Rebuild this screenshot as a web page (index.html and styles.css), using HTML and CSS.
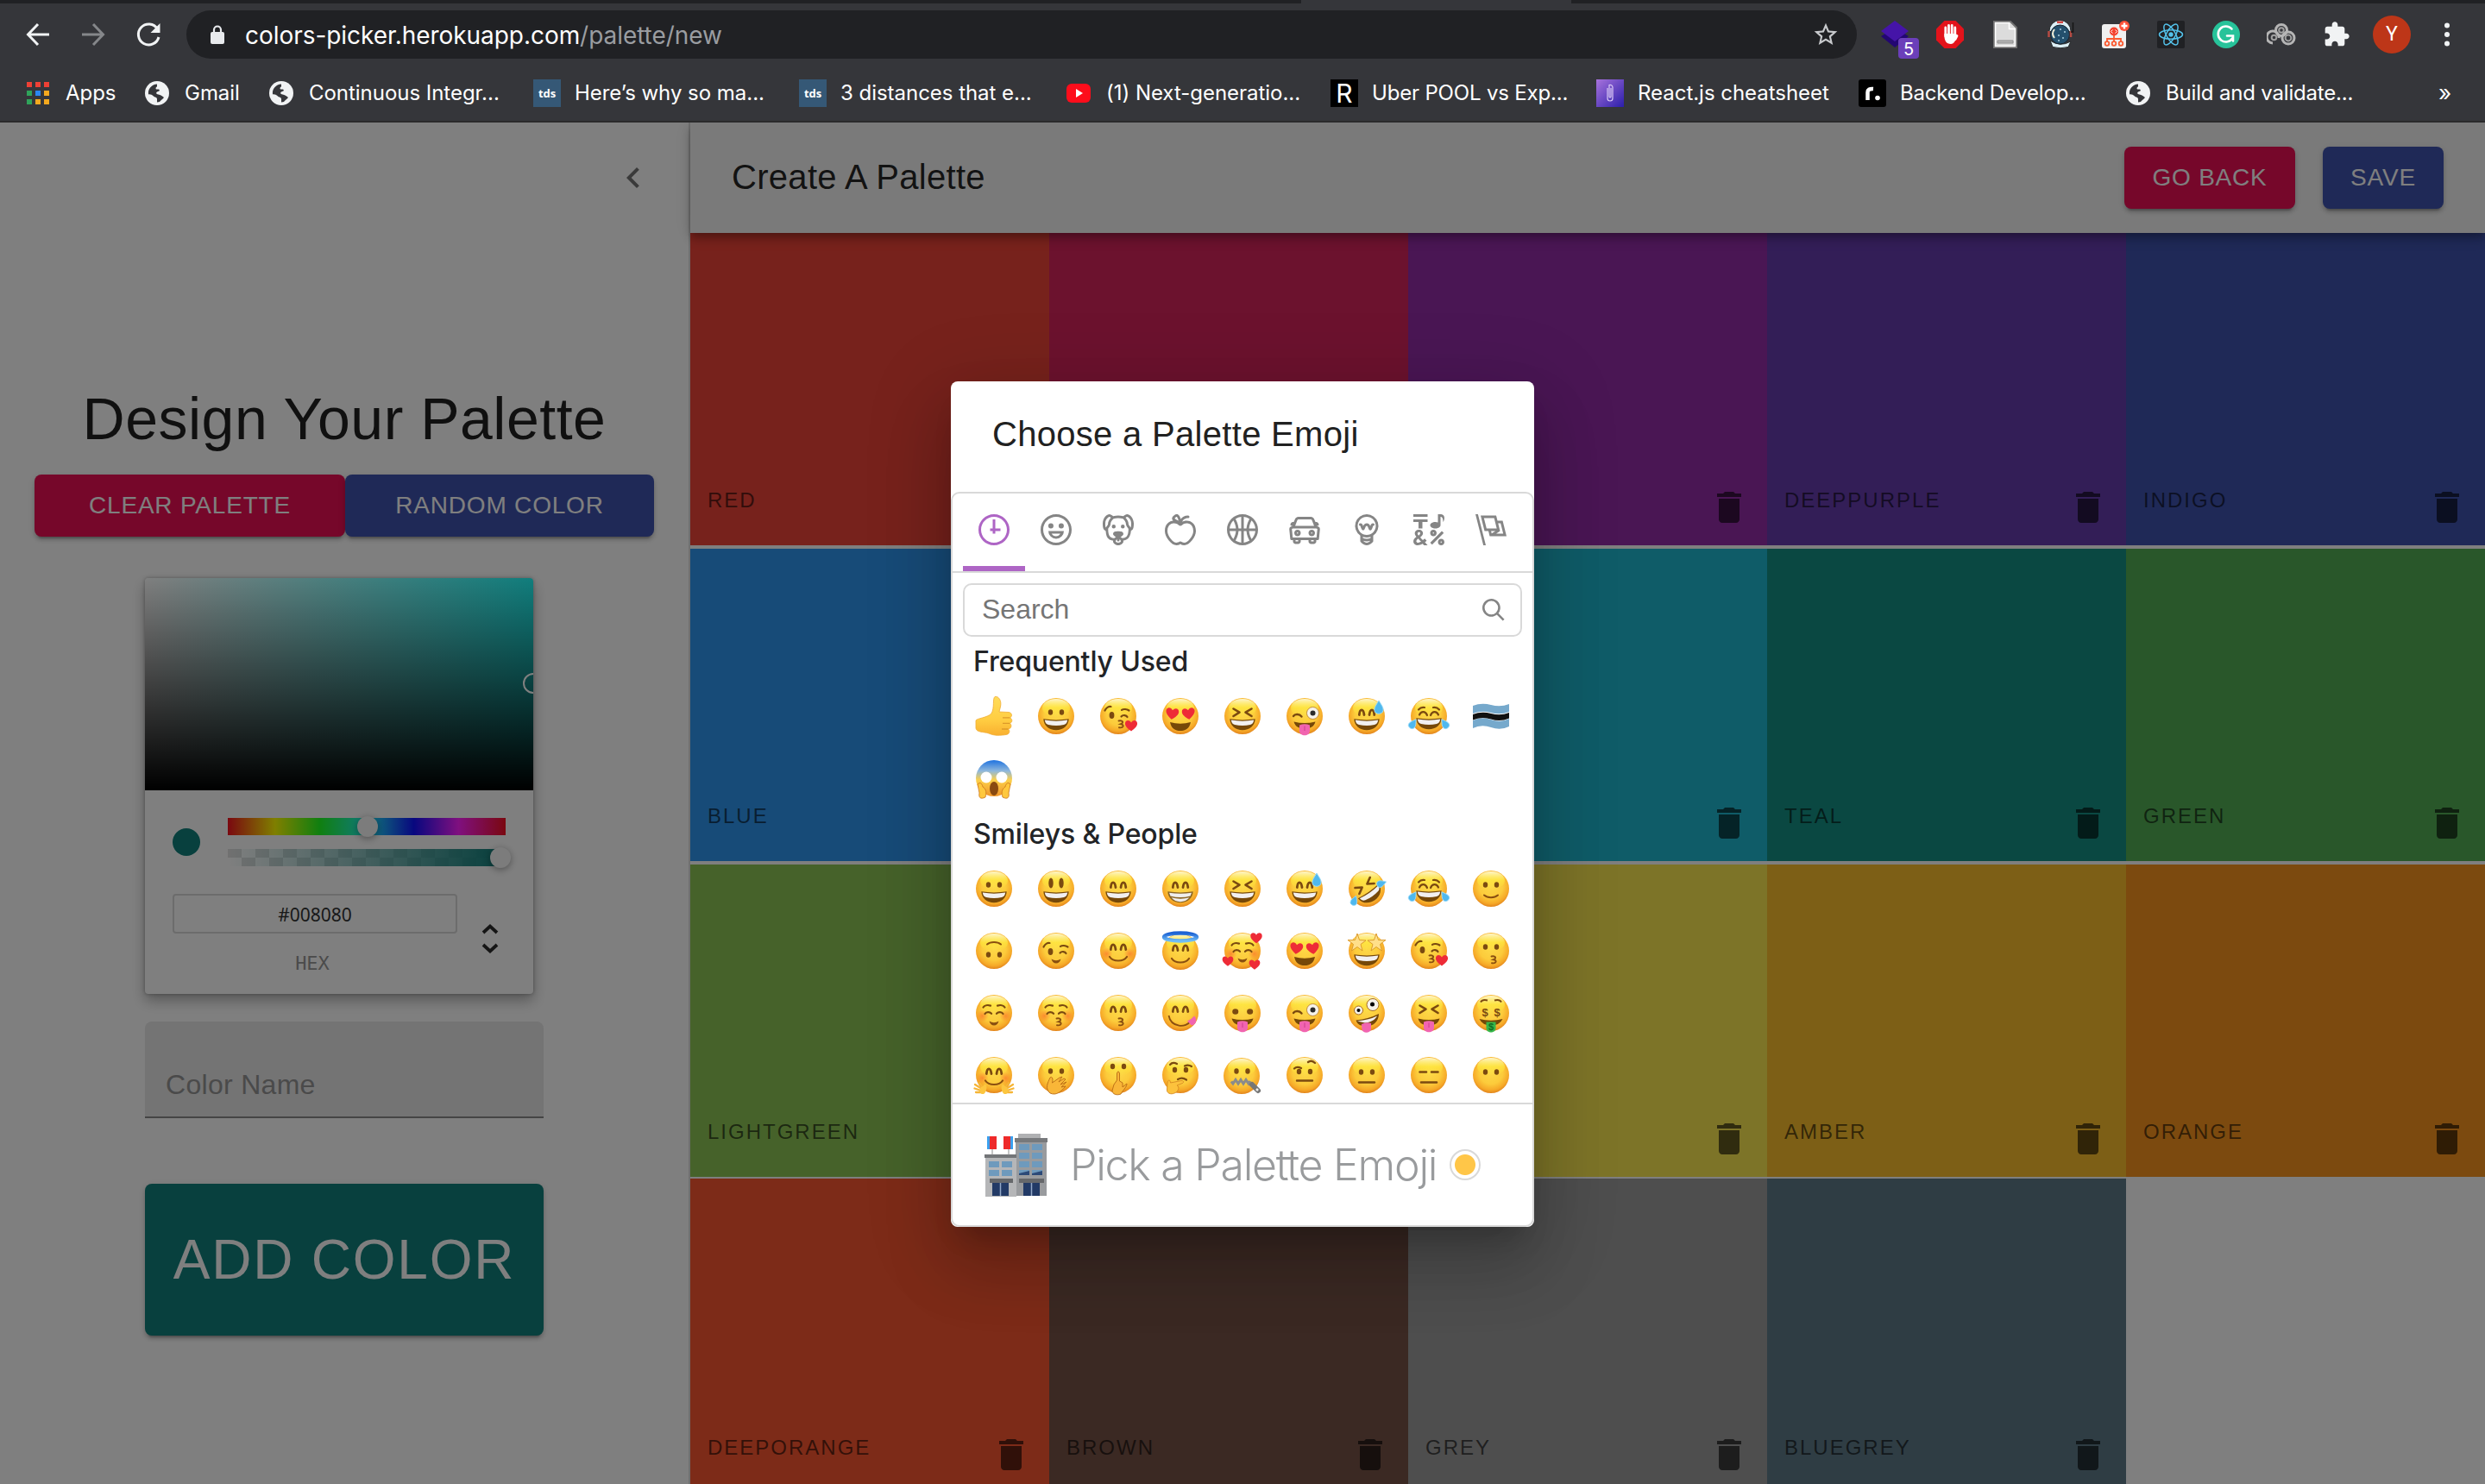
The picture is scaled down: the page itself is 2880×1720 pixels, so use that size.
FILE: index.html
```html
<!DOCTYPE html>
<html lang="en">
<head>
<meta charset="utf-8">
<title>Create A Palette</title>
<link rel="stylesheet" href="styles.css">
</head>
<body>
<svg class="defs" width="0" height="0" aria-hidden="true">
  <defs>
    <radialGradient id="skin" cx=".5" cy=".42" r=".6">
      <stop offset="0" stop-color="#fdd949"/><stop offset=".55" stop-color="#fccb3b"/><stop offset=".82" stop-color="#f6a928"/><stop offset="1" stop-color="#de7d1a"/>
    </radialGradient>
    <linearGradient id="shine" x1="0" y1="0" x2="0" y2="1">
      <stop offset="0" stop-color="#fffbe0" stop-opacity=".9"/><stop offset=".5" stop-color="#fff23f" stop-opacity=".55"/><stop offset="1" stop-color="#ffe93a" stop-opacity="0"/>
    </linearGradient>
    <linearGradient id="hand" x1="0" y1="0" x2="0" y2="1"><stop offset="0" stop-color="#ffdc5a"/><stop offset=".6" stop-color="#ffcd42"/><stop offset="1" stop-color="#f9b030"/></linearGradient>
    <linearGradient id="fear" x1="0" y1="0" x2="0" y2="1"><stop offset="0" stop-color="#1e72e0"/><stop offset=".3" stop-color="#8fb8dc"/><stop offset=".55" stop-color="#fcd04a"/><stop offset="1" stop-color="#f0962a"/></linearGradient>
    <linearGradient id="halo" x1="0" y1="0" x2="0" y2="1"><stop offset="0" stop-color="#1c62d4"/><stop offset="1" stop-color="#6fbdf5"/></linearGradient>
    <linearGradient id="violet" x1="0" y1="0" x2="1" y2="1"><stop offset="0" stop-color="#a873dc"/><stop offset="1" stop-color="#2b1eaa"/></linearGradient>
    <radialGradient id="blushfill"><stop offset="0" stop-color="#fb7a2c" stop-opacity=".75"/><stop offset="1" stop-color="#fb7a2c" stop-opacity="0"/></radialGradient>
    <g id="face"><circle cx="24" cy="24" r="21" fill="url(#skin)"/><ellipse cx="24" cy="14.5" rx="16" ry="10.5" fill="url(#shine)"/></g>
    <g id="dots" fill="#7b4a10"><ellipse cx="17.5" cy="19.5" rx="2.7" ry="3.3"/><ellipse cx="30.5" cy="19.5" rx="2.7" ry="3.3"/></g>
    <g id="tall" fill="#7b4a10"><ellipse cx="18" cy="17.5" rx="2.7" ry="6"/><ellipse cx="30" cy="17.5" rx="2.7" ry="6"/></g>
    <g id="arcs" fill="none" stroke="#7b4a10" stroke-width="2.8" stroke-linecap="round"><path d="M15.3 22.5C16 15 20 15 21 22.5M27 22.5C28 15 32 15 32.8 22.5"/></g>
    <g id="squint" fill="none" stroke="#7b4a10" stroke-width="2.6" stroke-linecap="round" stroke-linejoin="round"><path d="M13.5 15.5L20.5 19.7 13.5 24M34.5 15.5L27.5 19.7 34.5 24"/></g>
    <g id="calm" fill="none" stroke="#7b4a10" stroke-width="2.2" stroke-linecap="round"><path d="M13.5 25C15 22.5 19 22.5 21 24.8M27 24.8C29 22.5 33 22.5 34.5 25M11.5 17.5C13 15 17 14.6 20 15.6M36.5 17.5C35 15 31 14.6 28 15.6"/></g>
    <g id="wink" fill="none" stroke="#7b4a10" stroke-width="2.2" stroke-linecap="round"><path d="M9.5 19.5C11 16.5 14 14.5 16.5 15M29 18.8C31 17.5 35 17.8 37.5 19.5M28.5 26.5C30.5 24 34.5 25 35.5 27"/><ellipse cx="17.5" cy="25" rx="1.8" ry="3" fill="#7b4a10"/></g>
    <g id="grin"><path d="M9.3 27.3Q24 29.6 38.7 27.3C38.5 35 32 40.3 24 40.3S9.500 35 9.300 27.300Z" fill="#764808"/><path d="M10.800 28.600Q24 30.800 37.200 28.600C36.800 31.800 35.500 33.500 33 34Q24 36 15 34C12.500 33.500 11.200 31.800 10.800 28.600Z" fill="#f2f0f0"/></g>
    <g id="beam"><path d="M9.300 27.300Q24 29.600 38.700 27.300C38.500 35 32 40.300 24 40.300S9.500 35 9.300 27.300Z" fill="#8b6524"/><path d="M11 28.700Q24 31 37 28.700L35.500 32.500Q24 35.500 12.500 32.500ZM13.500 34.300Q24 37 34.500 34.300C32 37.500 28 39.200 24 39.200S16 37.500 13.500 34.300Z" fill="#efeeee"/></g>
    <g id="smile" fill="none" stroke="#8a4f10" stroke-width="2.200" stroke-linecap="round"><path d="M14 31C18 37 30 37 34 31"/></g>
    <g id="slight" fill="none" stroke="#8a4f10" stroke-width="2" stroke-linecap="round"><path d="M16 31.500C20 35 28 35 32 31.500"/></g>
    <path id="smirk" d="M18.500 33.500Q24 37 29.500 33.500Q28 38.500 24 38.500T18.500 33.500Z" fill="#8a4f10"/>
    <path id="pucker" d="M24.500 30.500C29 29.300 31 32.800 27 34.200C31.500 35 30 39.200 25 38.200" fill="none" stroke="#8a4f10" stroke-width="1.900" stroke-linecap="round"/>
    <g id="blush" fill="url(#blushfill)"><circle cx="10.500" cy="27.500" r="7"/><circle cx="37.500" cy="27.500" r="7"/></g>
    <path id="heart" d="M0 6.500C-4 3.500-7.500 .5-7-3-6.500-6.800-2-7 0-3.500 2-7 6.500-6.800 7-3 7.500 .5 4 3.500 0 6.500Z" fill="#ee2b37"/>
    <g id="hearts"><use href="#heart" transform="translate(14.500 21) rotate(8) scale(1.050)"/><use href="#heart" transform="translate(33.500 21) rotate(-8) scale(1.050)"/></g>
    <g id="open"><path d="M12 31Q24 34.500 36 31C34.500 38.500 30 41 24 41S13.500 38.500 12 31Z" fill="#764808"/></g>
    <g id="tongue"><path d="M11.500 30.500Q24 33.500 36.500 30.500C35 36.500 30 38.500 24 38.500S13 36.500 11.500 30.500Z" fill="#764808"/><path d="M18 34.500Q24 32 30 34.500V41C30 48 18 48 18 41Z" fill="#f164b0"/><path d="M24 35.500V41" stroke="#cf3d8d" stroke-width="1"/></g>
    <g id="goofy"><circle cx="33.500" cy="20.500" r="7" fill="#f6f3ea" stroke="#b4752a" stroke-width=".8"/><circle cx="33.500" cy="20.500" r="3" fill="#2b2b2b"/><path d="M11 24C13 21 18 21.500 20.500 24.500" fill="none" stroke="#7b4a10" stroke-width="2.400" stroke-linecap="round"/></g>
    <path id="drop" d="M0-8C3-3 5.500 0 5 3.500 4.500 8.500-4.500 8.500-5 3.500-5.500 0-3-3 0-8Z" fill="#4fb8ee" stroke="#9ddcf9" stroke-width="1"/>
    <g id="joy"><path d="M13 22.500C15 18 20 18 22 23M26 23C28 18 33 18 35 22.500M12 16.500Q15 13 19 14M36 16.500Q33 13 29 14" fill="none" stroke="#7b4a10" stroke-width="2.200" stroke-linecap="round"/><use href="#grin" transform="translate(0 -1)"/><use href="#drop" transform="translate(5.500 33) rotate(35) scale(.8)"/><use href="#drop" transform="translate(42.500 33) rotate(-35) scale(.8)"/></g>
    <g id="globe"><circle cx="14" cy="14" r="14" fill="#f1f3f4"/><path d="M14 3.500A10.500 10.500 0 0 0 4 15.500C6 15 8 16 10 17.500 11 19 14 18 14 21V24.400A10.500 10.500 0 0 0 17 24C18 22 21 21 22 19 20 17 18 16 15.500 15.500 13 15 12 13 15 12 18 11.500 17 9 14.500 9.500 12 10 12 7 14 6.500Z" fill="#35363a"/></g>
    <path id="trash" d="M6 19c0 1.100.9 2 2 2h8c1.100 0 2-.9 2-2V7H6v12zM19 4h-3.500l-1-1h-5l-1 1H5v2h14V4z"/>
  </defs>
</svg>

<header class="chrome">
  <div class="tabstrip"><span class="tabstrip-active"></span></div>
  <div class="toolbar">
    <div class="nav">
      <svg width="32" height="32" viewBox="0 0 32 32" fill="none" stroke="#f1f3f4" stroke-width="3"><path d="M29 16H5M16 4L4.500 16 16 28"/></svg>
      <svg width="32" height="32" viewBox="0 0 32 32" fill="none" stroke="#85878a" stroke-width="3"><path d="M3 16H27M16 4L27.500 16 16 28"/></svg>
      <svg width="32" height="32" viewBox="0 0 32 32"><path d="M26.500 9.500A12 12 0 1 0 28 19" fill="none" stroke="#f1f3f4" stroke-width="3"/><path d="M29.500 3V14H18.500Z" fill="#f1f3f4"/></svg>
    </div>
    <div class="omnibox">
      <svg width="16" height="22" viewBox="0 0 16 22"><rect y="8" width="16" height="14" rx="2" fill="#e8eaed"/><path d="M4 9V5.500a4 4 0 0 1 8 0V9" fill="none" stroke="#e8eaed" stroke-width="2.200"/></svg>
      <span class="url">colors-picker.herokuapp.com<span class="url-path">/palette/new</span></span>
      <svg class="star" width="32" height="32" viewBox="0 0 24 24" fill="#c8cacd"><path d="M22 9.240l-7.190-.62L12 2 9.190 8.630 2 9.240l5.460 4.730L5.820 21 12 17.270 18.180 21l-1.630-7.030L22 9.240zM12 15.400l-3.760 2.270 1-4.280-3.320-2.880 4.380-.38L12 6.100l1.710 4.040 4.380.38-3.320 2.880 1 4.280L12 15.400z"/></svg>
    </div>
    <div class="extensions">
      <div class="ext"><svg width="32" height="32" viewBox="0 0 32 32"><path d="M0 18L16 31 32 18 16 8Z" fill="#230672"/><path d="M0 12L16 0 32 12 16 24Z" fill="#4514a8"/></svg><span class="badge">5</span></div>
      <div class="ext"><svg width="32" height="32" viewBox="0 0 32 32"><path d="M9.500 0H22.500L32 9.500V22.500L22.500 32H9.500L0 22.500V9.500Z" fill="#e3131b"/><path d="M10.800 18V8M14.500 16V5.500M18.200 16V5.500M21.800 18V8M24 17.500L22 21.500" stroke="#fff" stroke-width="2.800" stroke-linecap="round"/><path d="M9.400 15H23.200V20C22 24 20 27 17 27 11.500 27 9.400 23 9.400 17Z" fill="#fff"/></svg></div>
      <div class="ext"><svg width="28" height="32" viewBox="0 0 28 32"><path d="M1 1H20L27 8V31H1Z" fill="#dcdcdc" stroke="#727272" stroke-width="2"/><path d="M2.500 2.500H18.500V9.500H25.500V29.500H2.500Z" fill="none" stroke="#fff" stroke-width="1.500"/><path d="M5 23H23V26H5Z" fill="#b4b4b4" stroke="#8d8d8d"/></svg></div>
      <div class="ext"><svg width="32" height="32" viewBox="0 0 32 32"><path d="M3 12A12.500 12.500 0 0 1 28 12M4 23Q15.500 31 28 24L25 30.500Q16 33 7 30.500Z" fill="#dceff6" stroke="#26292b"/><circle cx="15.500" cy="16" r="11" fill="#24506d" stroke="#16222c"/><path d="M9 10Q5 15 9 20" stroke="#f4f0d8" stroke-width="2" fill="none"/><path d="M12 .5H19V3H12Z" fill="#d34844"/><path d="M2.500 12V19M28 12V19" stroke="#b64b43" stroke-width="2.500"/><path d="M30.500 2V13H28" stroke="#151515" stroke-width="1.500" fill="none"/><g fill="#b9dce9"><circle cx="16" cy="10" r=".9"/><circle cx="21" cy="13" r=".9"/><circle cx="14" cy="17" r=".9"/><circle cx="19" cy="20" r=".9"/><circle cx="14" cy="23" r=".9"/></g></svg></div>
      <div class="ext"><svg width="32" height="32" viewBox="0 0 32 32"><rect y="4" width="28" height="28" rx="3" fill="#f0f0f0"/><g fill="none" stroke="#fb5b31" stroke-width="1.800"><path d="M14 15V24M6 24V21H22V24"/><circle cx="6" cy="26.500" r="2.300"/><circle cx="14" cy="26.500" r="2.300"/><circle cx="22" cy="26.500" r="2.300"/></g><circle cx="14" cy="12.500" r="5" fill="#f4432f"/><path d="M12.500 10.500L10.500 12.500 12.500 14.500M15.500 10.500L17.500 12.500 15.500 14.500" fill="none" stroke="#fff"/><circle cx="26" cy="6" r="6" fill="#ff5238"/><path d="M26 2.500V9.500M22.500 6H29.500" stroke="#fff" stroke-width="2.400"/></svg></div>
      <div class="ext"><svg width="32" height="32" viewBox="0 0 32 32"><rect width="32" height="32" rx="2" fill="#202124"/><g fill="none" stroke="#53c1ea" stroke-width="1.500"><ellipse cx="16" cy="16" rx="13.500" ry="5.200"/><ellipse cx="16" cy="16" rx="13.500" ry="5.200" transform="rotate(60 16 16)"/><ellipse cx="16" cy="16" rx="13.500" ry="5.200" transform="rotate(120 16 16)"/></g><circle cx="16" cy="16" r="2.700" fill="#53c1ea"/></svg></div>
      <div class="ext"><svg width="32" height="32" viewBox="0 0 32 32"><circle cx="16" cy="16" r="16" fill="#27c39a"/><path d="M22.500 9.500A9 9 0 1 0 23.500 20M17 17.500H24V23.500" fill="none" stroke="#fff" stroke-width="2.600" stroke-linecap="round"/></svg></div>
      <div class="ext"><svg width="34" height="28" viewBox="0 0 34 28" fill="none"><g stroke="#b5b5b5" stroke-width="3"><circle cx="17" cy="9" r="6.500"/><circle cx="25" cy="18" r="7"/><path d="M7 24A7 7 0 1 1 14 18"/></g><g stroke="#a0a0a0" stroke-width="2"><circle cx="17" cy="9" r="2.800"/><circle cx="25" cy="18" r="3.400"/><circle cx="8.500" cy="17.500" r="2.800"/></g></svg></div>
      <div class="ext"><svg width="32" height="32" viewBox="0 0 24 24" fill="#f1f3f4"><path d="M20.500 11H19V7c0-1.100-.9-2-2-2h-4V3.500C13 2.120 11.880 1 10.500 1S8 2.120 8 3.500V5H4c-1.100 0-1.990.9-1.990 2v3.800H3.500c1.490 0 2.700 1.210 2.700 2.700s-1.210 2.700-2.700 2.700H2V20c0 1.100.9 2 2 2h3.800v-1.500c0-1.490 1.210-2.700 2.700-2.700 1.490 0 2.700 1.210 2.700 2.700V22H17c1.100 0 2-.9 2-2v-4h1.500c1.380 0 2.500-1.120 2.500-2.500S21.880 11 20.500 11z"/></svg></div>
      <div class="ext"><span class="avatar">Y</span></div>
      <div class="ext"><svg width="6" height="28" viewBox="0 0 6 28" fill="#f1f3f4"><circle cx="3" cy="3.500" r="3"/><circle cx="3" cy="14" r="3"/><circle cx="3" cy="24.500" r="3"/></svg></div>
    </div>
  </div>
  <nav class="bookmarks">
    <a class="bookmark"><span class="fav"><svg width="28" height="28" viewBox="0 0 28 28"><path d="M1 1h6v6H1zM11 1h6v6h-6zM21 1h6v6h-6z" fill="#ee4035"/><path d="M1 11h6v6H1zM1 21h6v6H1z" fill="#2fa35a"/><path d="M11 11h6v6h-6z" fill="#2a86f2"/><path d="M21 11h6v6h-6zM11 21h6v6h-6zM21 21h6v6h-6z" fill="#f4a91f"/></svg></span><span>Apps</span></a>
    <a class="bookmark"><span class="fav"><svg width="28" height="28"><use href="#globe"/></svg></span><span>Gmail</span></a>
    <a class="bookmark"><span class="fav"><svg width="28" height="28"><use href="#globe"/></svg></span><span>Continuous Integr...</span></a>
    <a class="bookmark"><span class="fav fav-tds">tds</span><span>Here’s why so ma...</span></a>
    <a class="bookmark"><span class="fav fav-tds">tds</span><span>3 distances that e...</span></a>
    <a class="bookmark"><span class="fav"><svg width="28" height="22" viewBox="0 0 28 22"><rect width="28" height="22" rx="6" fill="#fd0d1b"/><path d="M11 6L19 11 11 16Z" fill="#fff"/></svg></span><span>(1) Next-generatio...</span></a>
    <a class="bookmark"><span class="fav fav-r">R</span><span class="snug">Uber POOL vs Exp...</span></a>
    <a class="bookmark"><span class="fav"><svg width="32" height="32" viewBox="0 0 32 32"><rect width="32" height="32" fill="url(#violet)"/><path d="M13 10V22a3 3 0 0 0 6 0V9a3 3 0 0 0-4-2.500V20a1 1 0 0 0 2 0V10" fill="none" stroke="#d9c9f5" stroke-width="1.200"/></svg></span><span>React.js cheatsheet</span></a>
    <a class="bookmark"><span class="fav"><svg width="32" height="32" viewBox="0 0 32 32"><rect width="32" height="32" rx="3"/><path d="M10.500 24V15Q10.500 10.500 17 11" fill="none" stroke="#fff" stroke-width="4.500"/><circle cx="22" cy="21.500" r="2.800" fill="#fff"/></svg></span><span class="snug">Backend Develop...</span></a>
    <a class="bookmark"><span class="fav"><svg width="28" height="28"><use href="#globe"/></svg></span><span class="snug">Build and validate...</span></a>
    <span class="more">»</span>
  </nav>
</header>

<div class="page">
  <aside class="drawer">
    <div class="drawer-head"><svg width="48" height="48" viewBox="0 0 24 24" fill="#757575"><path d="M15.410 7.410L14 6l-6 6 6 6 1.410-1.410L10.830 12z"/></svg></div>
    <h1 class="drawer-title">Design Your Palette</h1>
    <div class="drawer-buttons">
      <button class="btn btn-pink">CLEAR PALETTE</button>
      <button class="btn btn-blue">RANDOM COLOR</button>
    </div>
    <div class="picker">
      <div class="saturation"><span class="sat-knob"></span></div>
      <div class="picker-body">
        <div class="sliders">
          <span class="swatch"></span>
          <div class="tracks">
            <div class="hue"><span class="knob knob-hue"></span></div>
            <div class="alpha"><span class="knob knob-alpha"></span></div>
          </div>
        </div>
        <div class="hex-row">
          <div class="hex-field"><div class="hex-input">#008080</div><div class="hex-label">HEX</div></div>
          <svg width="20" height="36" viewBox="0 0 20 36" fill="none" stroke="#2b2b2b" stroke-width="3.800"><path d="M2 11L10 3.500 18 11M2 25L10 32.500 18 25"/></svg>
        </div>
      </div>
    </div>
    <div class="name-field">Color Name</div>
    <button class="btn add-btn">ADD COLOR</button>
  </aside>

  <main class="main">
    <div class="appbar">
      <h2 class="appbar-title">Create A Palette</h2>
      <button class="btn btn-pink">GO BACK</button>
      <button class="btn btn-blue">SAVE</button>
    </div>
    <div class="tiles">
      <div class="tile red"><span>RED</span><svg class="trash" viewBox="0 0 24 24"><use href="#trash"/></svg></div>
      <div class="tile pink"><span>PINK</span><svg class="trash" viewBox="0 0 24 24"><use href="#trash"/></svg></div>
      <div class="tile purple"><span>PURPLE</span><svg class="trash" viewBox="0 0 24 24"><use href="#trash"/></svg></div>
      <div class="tile deeppurple"><span>DEEPPURPLE</span><svg class="trash" viewBox="0 0 24 24"><use href="#trash"/></svg></div>
      <div class="tile indigo"><span>INDIGO</span><svg class="trash" viewBox="0 0 24 24"><use href="#trash"/></svg></div>
      <div class="tile blue"><span>BLUE</span><svg class="trash" viewBox="0 0 24 24"><use href="#trash"/></svg></div>
      <div class="tile lightblue"><span>LIGHTBLUE</span><svg class="trash" viewBox="0 0 24 24"><use href="#trash"/></svg></div>
      <div class="tile cyan"><span>CYAN</span><svg class="trash" viewBox="0 0 24 24"><use href="#trash"/></svg></div>
      <div class="tile teal"><span>TEAL</span><svg class="trash" viewBox="0 0 24 24"><use href="#trash"/></svg></div>
      <div class="tile green"><span>GREEN</span><svg class="trash" viewBox="0 0 24 24"><use href="#trash"/></svg></div>
      <div class="tile lightgreen"><span>LIGHTGREEN</span><svg class="trash" viewBox="0 0 24 24"><use href="#trash"/></svg></div>
      <div class="tile lime"><span>LIME</span><svg class="trash" viewBox="0 0 24 24"><use href="#trash"/></svg></div>
      <div class="tile yellow"><span>YELLOW</span><svg class="trash" viewBox="0 0 24 24"><use href="#trash"/></svg></div>
      <div class="tile amber"><span>AMBER</span><svg class="trash" viewBox="0 0 24 24"><use href="#trash"/></svg></div>
      <div class="tile orange"><span>ORANGE</span><svg class="trash" viewBox="0 0 24 24"><use href="#trash"/></svg></div>
      <div class="tile deeporange"><span>DEEPORANGE</span><svg class="trash" viewBox="0 0 24 24"><use href="#trash"/></svg></div>
      <div class="tile brown"><span>BROWN</span><svg class="trash" viewBox="0 0 24 24"><use href="#trash"/></svg></div>
      <div class="tile grey"><span>GREY</span><svg class="trash" viewBox="0 0 24 24"><use href="#trash"/></svg></div>
      <div class="tile bluegrey"><span>BLUEGREY</span><svg class="trash" viewBox="0 0 24 24"><use href="#trash"/></svg></div>
    </div>
  </main>

  <div class="backdrop">
    <section class="dialog">
      <h2 class="dialog-title">Choose a Palette Emoji</h2>
      <div class="mart">
        <div class="anchors">
          <span class="anchor active"><svg viewBox="0 0 24 24"><path d="M13 4h-2l-.001 7H9v2h2v2h2v-2h4v-2h-4z"/><path d="M12 0C5.373 0 0 5.373 0 12s5.373 12 12 12 12-5.373 12-12S18.627 0 12 0m0 22C6.486 22 2 17.514 2 12S6.486 2 12 2s10 4.486 10 10-4.486 10-10 10"/></svg></span>
          <span class="anchor"><svg viewBox="0 0 24 24"><path d="M12 0C5.373 0 0 5.373 0 12s5.373 12 12 12 12-5.373 12-12S18.627 0 12 0m0 22C6.486 22 2 17.514 2 12S6.486 2 12 2s10 4.486 10 10-4.486 10-10 10"/><path d="M8 7a2 2 0 1 0-.001 3.999A2 2 0 0 0 8 7M16 7a2 2 0 1 0-.001 3.999A2 2 0 0 0 16 7M15.232 15c-.693 1.195-1.870 2-3.349 2-1.477 0-2.655-.805-3.347-2H15m3-2H6a6 6 0 1 0 12 0"/></svg></span>
          <span class="anchor"><svg viewBox="0 0 24 24"><path d="M15.500 8a1.500 1.500 0 1 0 .001 3.001A1.500 1.500 0 0 0 15.500 8M8.500 8a1.500 1.500 0 1 0 .001 3.001A1.500 1.500 0 0 0 8.500 8"/><path d="M18.933 0h-.027c-.97 0-2.138.787-3.018 1.497-1.274-.374-2.612-.51-3.887-.51-1.285 0-2.616.133-3.874.517C7.245.79 6.069 0 5.093 0h-.027C3.352 0 .07 2.670.002 7.026c-.039 2.479.276 4.238 1.040 5.013.254.258.882.677 1.295.882.191 3.177.922 5.238 2.536 6.380.897.637 2.187.949 3.200 1.102C8.040 20.600 8 20.795 8 21c0 1.773 2.350 3 4 3 1.648 0 4-1.227 4-3 0-.201-.038-.393-.072-.586 2.573-.385 5.435-1.877 5.925-7.587.396-.22.887-.568 1.104-.788.763-.774 1.079-2.534 1.040-5.013C23.929 2.670 20.646 0 18.933 0M3.223 9.135c-.237.281-.837 1.155-.884 1.238-.15-.41-.368-1.349-.337-3.291.051-3.281 2.478-4.972 3.091-5.031.256.015.731.27 1.265.646-1.110 1.171-2.275 2.915-2.352 5.125-.133.546-.398.858-.783 1.313M12 22c-.901 0-1.954-.693-2-1 0-.654.475-1.236 1-1.602V20a1 1 0 1 0 2 0v-.602c.524.365 1 .947 1 1.602-.046.307-1.099 1-2 1m3-3.480v.02a4.752 4.752 0 0 0-1.262-1.020c1.092-.516 2.239-1.334 2.239-2.217 0-1.842-1.781-2.195-3.977-2.195-2.196 0-3.978.354-3.978 2.195 0 .883 1.148 1.701 2.238 2.217A4.800 4.800 0 0 0 9 18.539v-.025c-1-.076-2.182-.281-2.973-.842-1.301-.92-1.838-3.045-1.853-6.478l.023-.041c.496-.826 1.490-1.450 1.804-3.102 0-2.047 1.357-3.631 2.362-4.522C9.370 3.178 10.555 3 11.948 3c1.447 0 2.685.192 3.733.57 1 .9 2.316 2.465 2.316 4.480.313 1.651 1.307 2.275 1.803 3.102.035.058.068.117.102.178-.059 5.967-1.949 7.010-4.902 7.190m6.628-8.202c-.037-.065-.074-.13-.113-.195a7.587 7.587 0 0 0-.739-.987c-.385-.455-.648-.768-.782-1.313-.076-2.209-1.241-3.954-2.353-5.124.531-.376 1.004-.63 1.261-.647.636.071 3.044 1.764 3.096 5.031.027 1.810-.347 3.218-.37 3.235"/></svg></span>
          <span class="anchor"><svg viewBox="0 0 24 24"><path d="M17 4.978c-1.838 0-2.876.396-3.680.934.513-1.172 1.768-2.934 4.680-2.934a1 1 0 0 0 0-2c-2.921 0-4.629 1.365-5.547 2.512-.064.078-.119.162-.18.244C11.730 1.838 10.798.023 9.207.023 8.579.022 7.850.306 7 .978 5.027 2.540 5.329 3.902 6.492 4.999 3.609 5.222 0 7.352 0 12.969c0 4.582 4.961 11.009 9 11.009 1.975 0 2.371-.486 3-1 .629.514 1.025 1 3 1 4.039 0 9-6.418 9-11 0-5.953-4.055-8-7-8M8.242 2.546c.641-.508.943-.523.965-.523.426.169.975 1.405 1.357 3.055-1.527-.629-2.741-1.352-2.980-1.846.059-.112.241-.356.658-.686M15 21.978c-1.080 0-1.210-.109-1.559-.402l-.176-.146c-.367-.302-.816-.452-1.266-.452s-.898.15-1.266.452l-.176.146c-.347.292-.477.402-1.557.402-2.813 0-7-5.389-7-9.009 0-5.823 4.488-5.991 5-5.991 1.939 0 2.484.471 3.387 1.251l.323.276a1.995 1.995 0 0 0 2.580 0l.323-.276c.902-.78 1.447-1.251 3.387-1.251.512 0 5 .168 5 6 0 3.617-4.187 9-7 9"/></svg></span>
          <span class="anchor"><svg viewBox="0 0 24 24"><path d="M12 0C5.373 0 0 5.372 0 12c0 6.627 5.373 12 12 12 6.628 0 12-5.373 12-12 0-6.628-5.372-12-12-12m9.949 11H17.050c.224-2.527 1.232-4.773 1.968-6.113A9.966 9.966 0 0 1 21.949 11M13 11V2.051a9.945 9.945 0 0 1 4.432 1.564c-.858 1.491-2.156 4.220-2.392 7.385H13zm-2 0H8.961c-.238-3.165-1.536-5.894-2.393-7.385A9.950 9.950 0 0 1 11 2.051V11zm0 2v8.949a9.937 9.937 0 0 1-4.432-1.564c.857-1.492 2.155-4.221 2.393-7.385H11zm4.040 0c.236 3.164 1.534 5.893 2.392 7.385A9.920 9.920 0 0 1 13 21.949V13h2.040zM4.982 4.887C5.718 6.227 6.726 8.473 6.951 11h-4.900a9.977 9.977 0 0 1 2.931-6.113M2.051 13h4.900c-.226 2.527-1.233 4.771-1.969 6.113A9.972 9.972 0 0 1 2.051 13m16.967 6.113c-.735-1.342-1.744-3.586-1.968-6.113h4.899a9.961 9.961 0 0 1-2.931 6.113"/></svg></span>
          <span class="anchor"><svg viewBox="0 0 24 24"><path d="M6.500 12C5.122 12 4 13.121 4 14.500S5.122 17 6.500 17 9 15.879 9 14.500 7.878 12 6.500 12m0 3c-.275 0-.5-.225-.5-.5s.225-.5.5-.5.5.225.5.5-.225.5-.5.5M17.500 12c-1.378 0-2.500 1.121-2.500 2.500s1.122 2.500 2.500 2.500 2.500-1.121 2.500-2.500-1.122-2.500-2.500-2.500m0 3c-.275 0-.5-.225-.5-.5s.225-.5.5-.5.5.225.5.5-.225.5-.5.5"/><path d="M22.482 9.494l-1.039-.346L21.400 9h.6c.552 0 1-.439 1-.992 0-.006-.003-.008-.003-.008H23c0-1-.889-2-1.984-2h-.642l-.731-1.717C19.262 3.012 18.091 2 16.764 2H7.236C5.909 2 4.738 3.012 4.357 4.283L3.626 6h-.642C1.889 6 1 7 1 8h.003S1 8.002 1 8.008C1 8.561 1.448 9 2 9h.6l-.043.148-1.039.346a2.001 2.001 0 0 0-1.359 2.097l.751 7.508a1 1 0 0 0 .994.901H3v1c0 1.103.896 2 2 2h2c1.104 0 2-.897 2-2v-1h6v1c0 1.103.896 2 2 2h2c1.104 0 2-.897 2-2v-1h1.096a.999.999 0 0 0 .994-.901l.751-7.508a2.001 2.001 0 0 0-1.359-2.097M6.273 4.857C6.402 4.430 6.788 4 7.236 4h9.527c.448 0 .834.43.963.857L19.313 9H4.688l1.585-4.143zM7 21H5v-1h2v1zm12 0h-2v-1h2v1zm2.189-3H2.811l-.662-6.607L3 11h18l.852.393L21.189 18z"/></svg></span>
          <span class="anchor"><svg viewBox="0 0 24 24"><path d="M12 0a9 9 0 0 0-5 16.482V21s2.035 3 5 3 5-3 5-3v-4.518A9 9 0 0 0 12 0zm0 2c3.860 0 7 3.141 7 7s-3.140 7-7 7-7-3.141-7-7 3.140-7 7-7zM9 17.477c.94.332 1.946.523 3 .523s2.060-.19 3-.523v.834c-.91.436-1.925.689-3 .689a6.924 6.924 0 0 1-3-.69v-.833zm.236 3.070A8.854 8.854 0 0 0 12 21c.965 0 1.888-.167 2.758-.451C14.155 21.173 13.153 22 12 22c-1.102 0-2.117-.789-2.764-1.453z"/><path d="M14.745 12.449h-.004c-.852-.024-1.188-.858-1.577-1.824-.421-1.061-.703-1.561-1.182-1.566h-.009c-.481 0-.783.497-1.235 1.537-.436.982-.801 1.811-1.636 1.791l-.276-.043c-.565-.171-.853-.691-1.284-1.794-.125-.313-.202-.632-.27-.913-.051-.213-.127-.53-.195-.634C7.067 9.004 7.039 9 6.990 9A1 1 0 0 1 7 7h.01c1.662.017 2.015 1.373 2.198 2.134.486-.981 1.304-2.058 2.797-2.075 1.531.018 2.280 1.153 2.731 2.141l.002-.008C14.944 8.424 15.327 7 16.979 7h.032A1 1 0 1 1 17 9h-.011c-.149.076-.256.474-.319.709a6.484 6.484 0 0 1-.311.951c-.429.973-.79 1.789-1.614 1.789"/></svg></span>
          <span class="anchor"><svg viewBox="0 0 24 24"><path d="M0 0h11v2H0zM4 11h3V6h4V4H0v2h4zM15.500 17c1.381 0 2.500-1.116 2.500-2.493s-1.119-2.493-2.500-2.493S13 13.130 13 14.507 14.119 17 15.500 17m0-2.986c.276 0 .5.222.5.493 0 .272-.224.493-.5.493s-.5-.221-.5-.493.224-.493.5-.493M21.500 19.014c-1.381 0-2.500 1.116-2.500 2.493S20.119 24 21.500 24s2.500-1.116 2.500-2.493-1.119-2.493-2.500-2.493m0 2.986a.497.497 0 0 1-.5-.493c0-.271.224-.493.5-.493s.5.222.5.493a.497.497 0 0 1-.5.493M22 13l-9 9 1.513 1.500 8.990-9.009zM17 11c2.209 0 4-1.119 4-2.500V2s.985-.161 1.498.949C23.010 4.055 23 6 23 6s1-1.119 1-3.135C24-.02 21 0 21 0h-2v6.347A5.853 5.853 0 0 0 17 6c-2.209 0-4 1.119-4 2.500s1.791 2.500 4 2.500M10.297 20.482l-1.475-1.585a47.540 47.540 0 0 1-1.442 1.129c-.307-.288-.989-1.016-2.045-2.183.902-.836 1.479-1.466 1.729-1.892s.376-.871.376-1.336c0-.592-.273-1.178-.818-1.759-.546-.581-1.329-.871-2.349-.871-1.008 0-1.790.293-2.344.879-.556.587-.832 1.181-.832 1.784 0 .813.419 1.748 1.256 2.805-.847.614-1.444 1.208-1.794 1.784a3.465 3.465 0 0 0-.523 1.833c0 .857.308 1.560.924 2.107.616.549 1.423.823 2.420.823 1.173 0 2.444-.379 3.813-1.137L8.235 24h2.819l-2.090-2.383 1.333-1.135zm-6.736-6.389a1.020 1.020 0 0 1 .73-.286c.31 0 .559.085.747.254a.849.849 0 0 1 .283.659c0 .518-.419 1.112-1.257 1.784-.536-.651-.805-1.231-.805-1.742a.901.901 0 0 1 .302-.669M3.740 22c-.427 0-.778-.116-1.057-.349-.279-.232-.418-.487-.418-.766 0-.594.509-1.288 1.527-2.083.968 1.134 1.717 1.946 2.248 2.438-.921.507-1.686.76-2.300.76"/></svg></span>
          <span class="anchor"><svg viewBox="0 0 24 24"><path d="M0 0l6.084 24H8L1.916 0zM21 5h-4l-1-4H4l3 12h3l1 4h13L21 5zM6.563 3h7.875l2 8H8.563l-2-8zm8.832 10l-2.856 1.904L12.063 13h3.332zM19 13l-1.500-6h1.938l2 8H16l3-2z"/></svg></span>
        </div>
        <div class="search"><span>Search</span><svg width="26" height="26" viewBox="0 0 20 20" fill="#858585"><path d="M12.900 14.320a8 8 0 1 1 1.410-1.410l5.350 5.330-1.420 1.420-5.330-5.340zM8 14A6 6 0 1 0 8 2a6 6 0 0 0 0 12z"/></svg></div>
        <div class="scroll">
          <h3 class="category">Frequently Used</h3>
          <div class="emojis">
            <svg viewBox="0 0 48 48"><path d="M21 21C25 14 22 4 25 1.500 30 .5 33 7 31.500 13L30 19 41 19.500C45.500 20 45.500 25.500 42 25.800 46 27 45.500 32 42 32.400 45 33.500 44.500 38.500 40.500 39 43 40.500 42 45 38.500 45.400 32 46.500 24 47 18 44 12 42 3.500 43 3 38V29C4 26.500 16 26 21 21Z" fill="url(#hand)" stroke="#f0ac34" stroke-width=".8"/><path d="M42 25.800H34M42 32.400H34M40.500 39H33" stroke="#dd9a2a" stroke-width="1.300"/></svg>
            <svg viewBox="0 0 48 48"><use href="#face"/><use href="#dots"/><use href="#grin"/></svg>
            <svg viewBox="0 0 48 48"><use href="#face"/><use href="#wink" transform="translate(-1 -2)"/><use href="#pucker" transform="translate(0 -1)"/><use href="#heart" transform="translate(39 35)"/></svg>
            <svg viewBox="0 0 48 48"><use href="#face"/><use href="#open"/><use href="#hearts"/></svg>
            <svg viewBox="0 0 48 48"><use href="#face"/><use href="#squint"/><use href="#grin"/></svg>
            <svg viewBox="0 0 48 48"><use href="#face"/><use href="#goofy"/><use href="#tongue"/></svg>
            <svg viewBox="0 0 48 48"><use href="#face"/><use href="#arcs"/><use href="#grin"/><use href="#drop" transform="translate(38 14)"/></svg>
            <svg viewBox="0 0 48 48"><use href="#face"/><use href="#joy"/></svg>
            <svg viewBox="0 0 48 48"><path d="M3 12Q13 8 24 11T45 10V36Q35 41 24 37T3 38Z" fill="#76a9cc"/><path d="M3 21Q13 17 24 20T45 19V27Q35 32 24 28T3 29Z" fill="#fff"/><path d="M3 22Q13 18 24 21T45 20V26.500Q35 31 24 27.500T3 28.500Z" fill="#111"/></svg>
            <svg viewBox="0 0 48 48"><circle cx="24" cy="24" r="21" fill="url(#fear)"/><circle cx="15" cy="23" r="6.500" fill="#fff"/><circle cx="33" cy="23" r="6.500" fill="#fff"/><ellipse cx="24" cy="36" rx="5" ry="8" fill="#8a4a10"/><path d="M5 31C8 28 10 30 11 34 14 36 16 39 14 46 8 49 6 46 7 41ZM43 31C40 28 38 30 37 34 34 36 32 39 34 46 40 49 42 46 41 41Z" fill="#ffc83e" stroke="#c9741a" stroke-width=".8"/></svg>
          </div>
          <h3 class="category">Smileys &amp; People</h3>
          <div class="emojis">
            <svg viewBox="0 0 48 48"><use href="#face"/><use href="#dots"/><use href="#grin"/></svg>
            <svg viewBox="0 0 48 48"><use href="#face"/><use href="#tall"/><use href="#grin"/></svg>
            <svg viewBox="0 0 48 48"><use href="#face"/><use href="#arcs"/><use href="#grin"/></svg>
            <svg viewBox="0 0 48 48"><use href="#face"/><use href="#arcs"/><use href="#beam"/></svg>
            <svg viewBox="0 0 48 48"><use href="#face"/><use href="#squint"/><use href="#grin"/></svg>
            <svg viewBox="0 0 48 48"><use href="#face"/><use href="#arcs"/><use href="#grin"/><use href="#drop" transform="translate(38 14)"/></svg>
            <svg viewBox="0 0 48 48"><use href="#face"/><g transform="rotate(-35 24 24)"><use href="#squint"/><use href="#grin"/></g><use href="#drop" transform="translate(41 18) rotate(70) scale(.75)"/><use href="#drop" transform="translate(9.500 38) rotate(20) scale(.75)"/></svg>
            <svg viewBox="0 0 48 48"><use href="#face"/><use href="#joy"/></svg>
            <svg viewBox="0 0 48 48"><use href="#face"/><use href="#dots"/><use href="#slight"/></svg>

            <svg viewBox="0 0 48 48"><use href="#face"/><g transform="rotate(180 24 24)"><use href="#dots"/><use href="#slight"/></g></svg>
            <svg viewBox="0 0 48 48"><use href="#face"/><use href="#wink"/><use href="#smirk"/></svg>
            <svg viewBox="0 0 48 48"><use href="#face"/><use href="#blush"/><use href="#arcs"/><use href="#smile"/></svg>
            <svg viewBox="0 0 48 48"><use href="#face" transform="translate(0 1)"/><use href="#arcs" transform="translate(0 1)"/><use href="#smile" transform="translate(0 2)"/><ellipse cx="24" cy="8" rx="19" ry="4.500" fill="none" stroke="url(#halo)" stroke-width="4.500"/></svg>
            <svg viewBox="0 0 48 48"><use href="#face"/><use href="#blush"/><use href="#calm"/><use href="#smirk" transform="translate(0 -1)"/><use href="#heart" transform="translate(40 9) scale(.95)"/><use href="#heart" transform="translate(7 36) scale(.9)"/><use href="#heart" transform="translate(38 40) scale(.9)"/></svg>
            <svg viewBox="0 0 48 48"><use href="#face"/><use href="#open"/><use href="#hearts"/></svg>
            <svg viewBox="0 0 48 48"><use href="#face"/><use href="#grin" transform="translate(0 1)"/><g fill="#ffdf8a" stroke="#d99526" stroke-width=".9"><path d="M13 4L15.500 11.500 23 12 17 16.500 19 24 13 19.500 6.500 24 8.500 16.500 2 11.500 10.500 11.500Z"/><path d="M35 4L37.500 11.500 46 11.500 39.500 16.500 41.500 24 35 19.500 29 24 31 16.500 25 12 32.500 11.500Z"/></g></svg>
            <svg viewBox="0 0 48 48"><use href="#face"/><use href="#wink" transform="translate(-1 -2)"/><use href="#pucker" transform="translate(0 -1)"/><use href="#heart" transform="translate(39 35)"/></svg>
            <svg viewBox="0 0 48 48"><use href="#face"/><use href="#dots"/><use href="#pucker"/></svg>

            <svg viewBox="0 0 48 48"><use href="#face"/><use href="#blush"/><use href="#calm"/><use href="#smirk"/></svg>
            <svg viewBox="0 0 48 48"><use href="#face"/><use href="#blush"/><use href="#calm"/><use href="#pucker"/></svg>
            <svg viewBox="0 0 48 48"><use href="#face"/><use href="#arcs"/><use href="#pucker"/></svg>
            <svg viewBox="0 0 48 48"><use href="#face"/><use href="#arcs"/><path d="M10.500 27C13 41 31 42 36 33" fill="none" stroke="#8a4f10" stroke-width="1.800"/><path d="M32 33.500C35 32 38 30 40 27.500 44 31 42.500 38 37 38.500Z" fill="#f164b0"/></svg>
            <svg viewBox="0 0 48 48"><use href="#face"/><use href="#dots" transform="translate(-7 3) scale(1.300 1)"/><use href="#tongue"/></svg>
            <svg viewBox="0 0 48 48"><use href="#face"/><use href="#goofy"/><use href="#tongue"/></svg>
            <svg viewBox="0 0 48 48"><use href="#face"/><circle cx="14.500" cy="21" r="5" fill="#f6f3ea" stroke="#a76a22"/><circle cx="31" cy="14.500" r="7" fill="#f6f3ea" stroke="#a76a22"/><circle cx="14.500" cy="21" r="2"/><circle cx="30.500" cy="14" r="2.500"/><path d="M11.500 32.500Q26 31 38 25C38 35 29 41 22 39 16 39 13 37 11.500 32.500Z" fill="#764808"/><path d="M13 33.500Q27 32 36 27.500C34 32 28 35 22 35.500Z" fill="#f2f0f0"/><path d="M18 37Q24 34 29 36V43C28 48 19 48 18.500 43Z" fill="#f164b0"/></svg>
            <svg viewBox="0 0 48 48"><use href="#face"/><use href="#squint"/><use href="#tongue"/></svg>
            <svg viewBox="0 0 48 48"><use href="#face"/><path d="M12 11.500Q14 8 20 9.500M36 11.500Q34 8 28 9.500" fill="none" stroke="#7b4a10" stroke-width="2"/><text class="dollar" x="17" y="28">$</text><text class="dollar" x="31" y="28">$</text><path d="M10.500 31Q24 34.500 37.500 31Q34 38.500 24 38.500T10.500 31Z" fill="#764808"/><path d="M18.500 34.500H29.500V42C29 48 19 48 18.500 42Z" fill="#37b649"/><text class="dollar dollar-small" x="24" y="44">$</text></svg>

            <svg viewBox="0 0 48 48"><use href="#face"/><use href="#blush"/><use href="#arcs"/><use href="#smile" transform="translate(0 -.5)"/><g fill="none" stroke="#f6b535" stroke-width="2.300" stroke-linecap="round"><path d="M2 35L10 40M1.500 39.500L9 42M3 44L10 44M6.500 33L11 38M46 35L38 40M46.500 39.500L39 42M45 44L38 44M41.500 33L37 38"/></g><path d="M9 38C11 38 12 35 14 34.500 17 36 15 45 12 46 8 46.500 6 43 9 38ZM39 38C37 38 36 35 34 34.500 31 36 33 45 36 46 40 46.500 42 43 39 38Z" fill="#fcc63f"/></svg>
            <svg viewBox="0 0 48 48"><use href="#face"/><use href="#dots"/><path d="M17 45C11 40 14 33 17 27 19 25 21 28 19.500 33L28 27 31 26 27 32 33 28 35 29 29 35 36 32 30 38 35 37C29 44 24 48 17 45Z" fill="#f9b638" stroke="#b86a14" stroke-width=".9"/></svg>
            <svg viewBox="0 0 48 48"><use href="#face"/><use href="#dots" transform="translate(0 -5.500)"/><path d="M22.500 30V22Q24 17.500 25.500 22V31L29 33V38L34 34C34 38 29 42 27 46 22 48 17 46 17 42L19 35Z" fill="#f9b638" stroke="#b86a14" stroke-width=".9"/></svg>
            <svg viewBox="0 0 48 48"><use href="#face"/><use href="#dots" transform="translate(0 -1.500)"/><path d="M12 12Q15 8.500 20 11M29 13.500Q33 11.500 37 14M21 29Q26 26 31 29.500" fill="none" stroke="#7b4a10" stroke-width="2.200" stroke-linecap="round"/><path d="M9 33C10 29 12 29 12.500 33L25 30.500C29 30.500 28 33.500 25 34L20 36C24 38 21 44 17 45 13 47 8 45 8.500 41Z" fill="#fcc23d" stroke="#d68a22" stroke-width=".9"/></svg>
            <svg viewBox="0 0 48 48"><use href="#face" transform="translate(-1 1)"/><use href="#dots" transform="translate(-.5 0)"/><path d="M11 31.500L13 34 16 29.500 19 34 22 29.500 25 34 28 29.500 31 34 33 31" fill="none" stroke="#8b8b8b" stroke-width="3"/><path d="M35 35L42 42" stroke="#777" stroke-width="6" stroke-linecap="round"/><path d="M40 40L42 42" stroke="#eee" stroke-width="2.500"/></svg>
            <svg viewBox="0 0 48 48"><use href="#face"/><use href="#dots" transform="translate(0 .5)"/><path d="M12 16.500Q15 13.500 20 16M28 9Q32 6 36 10M15 30.500H33" fill="none" stroke="#7b4a10" stroke-width="2.400" stroke-linecap="round"/></svg>
            <svg viewBox="0 0 48 48"><use href="#face"/><use href="#dots" transform="translate(0 1)"/><path d="M15 32.500H33" stroke="#7b4a10" stroke-width="2.400" stroke-linecap="round"/></svg>
            <svg viewBox="0 0 48 48"><use href="#face"/><path d="M13.500 20.500H21M27 20.500H34.500M15 32.500H33" stroke="#7b4a10" stroke-width="2.600" stroke-linecap="round"/></svg>
            <svg viewBox="0 0 48 48"><use href="#face"/><use href="#dots" transform="translate(0 1)"/></svg>
          </div>
        </div>
        <div class="preview">
          <svg width="76" height="76" viewBox="0 0 76 76"><path d="M40 2H66V8H40Z" fill="#b0b1b3"/><path d="M37 8H73V74H37Z" fill="#999b9e"/><path d="M36 7H74V12H36Z" fill="#77797c"/><path d="M2 28H38V75H2Z" fill="#b5b6b8"/><path d="M1 26H38V30H1Z" fill="#737578"/><path d="M4 5H34V20H4Z" fill="#fff"/><path d="M4 5H8V20H4ZM30 5H34V20H30Z" fill="#3aa0ee"/><path d="M7 5H15V20H7ZM23 5H31V20H23Z" fill="#ee2a2a"/><path d="M10 20V27M29 20V27" stroke="#8b8b8b"/><path d="M41 14H53V21H41ZM56 14H68V21H56ZM41 24H53V31H41ZM56 24H68V31H56ZM41 34H53V41H41ZM56 34H68V41H56ZM6 34H18V41H6ZM21 34H33V41H21ZM6 44H18V51H6ZM21 44H33V51H21ZM41 44H53V50H41ZM56 44H68V50H56Z" fill="#6e9abd"/><path d="M41 50V48L53 45V50ZM56 50V48L68 45V50Z" fill="#2c4a78"/><path d="M7 54H34V59H7ZM41 54H70V59H41Z" fill="#66686b"/><path d="M10 59H29V74H10ZM46 59H65V74H46Z" fill="#223a66"/><path d="M19.500 59V74M55.500 59V74" stroke="#93a9c8" stroke-width="1.500"/></svg>
          <span class="preview-title">Pick a Palette Emoji</span>
          <span class="skin-tone"></span>
        </div>
      </div>
    </section>
  </div>
</div>
</body>
</html>
```
FILE: styles.css
```css
* { box-sizing: border-box; }
body {
  margin: 0;
  width: 2880px;
  height: 1720px;
  overflow: hidden;
  display: flex;
  flex-direction: column;
  font-family: "Liberation Sans", Helvetica, Arial, sans-serif;
  color: rgba(0, 0, 0, .87);
}
h1, h2, h3 { margin: 0; font-weight: 400; }
svg { display: block; flex: none; }
.defs { position: absolute; }

/* browser frame */
.chrome {
  flex: none;
  height: 142px;
  background: #35363a;
  border-bottom: 2px solid #2a2a2b;
  font-family: Inter, "Liberation Sans", sans-serif;
  color: #fff;
}
.tabstrip { height: 4px; background: #202124; padding-left: 1508px; }
.tabstrip-active { display: block; width: 313px; height: 4px; background: #35363a; }
.toolbar { height: 72px; display: flex; align-items: center; padding-left: 28px; }
.nav { display: flex; gap: 32px; width: 188px; }
.omnibox {
  width: 1936px;
  height: 56px;
  border-radius: 28px;
  background: #202124;
  display: flex;
  align-items: center;
  padding: 0 20px 0 28px;
}
.url { margin: 2px 0 0 24px; font-size: 28px; letter-spacing: -.05px; white-space: nowrap; }
.url-path { color: #9a9da1; }
.star { margin-left: auto; }
.extensions { display: flex; margin-left: 12px; }
.ext { width: 64px; height: 64px; display: flex; align-items: center; justify-content: center; position: relative; }
.badge {
  position: absolute;
  left: 36px;
  top: 36px;
  width: 24px;
  height: 24px;
  border-radius: 4px;
  background: #6b3fba;
  font-size: 20px;
  line-height: 26px;
  text-align: center;
}
.avatar {
  width: 44px;
  height: 44px;
  border-radius: 50%;
  background: #bd3618;
  font-family: Roboto, sans-serif;
  font-size: 23px;
  line-height: 44px;
  text-align: center;
}
.bookmarks {
  height: 64px;
  display: grid;
  grid-template-columns: 138px 144px 308px 308px 308px 308px 308px 304px 308px 364px auto;
  align-items: center;
  padding-left: 28px;
  font-size: 24px;
}
.bookmark { display: flex; align-items: center; gap: 16px; white-space: nowrap; letter-spacing: -.03px; }
.bookmark > span:last-child { margin-top: -2px; }
.snug { letter-spacing: -.18px; }
.fav { width: 32px; height: 32px; display: flex; align-items: center; justify-content: center; }
.fav-tds { background: #355876; font: 700 13px/32px "Open Sans", sans-serif; }
.fav-r { background: #000; font-size: 30px; }
.more { font-size: 26px; line-height: 24px; }

/* page */
.page { position: relative; flex: 1; min-height: 0; display: flex; background: #fff; overflow: hidden; }
.drawer {
  width: 800px;
  border-right: 2px solid #e0e0e0;
  display: flex;
  flex-direction: column;
}
.drawer-head { display: flex; justify-content: flex-end; height: 128px; padding: 40px 40px 0 0; }
.drawer-title { margin-top: 173px; text-align: center; font-size: 68px; line-height: 84px; letter-spacing: .5px; }
.btn {
  border: 0;
  border-radius: 8px;
  padding: 0;
  font-family: inherit;
  font-size: 28px;
  letter-spacing: .8px;
  color: #fff;
  height: 72px;
  box-shadow: 0 6px 2px -4px rgba(0, 0, 0, .2), 0 4px 4px rgba(0, 0, 0, .14), 0 2px 10px rgba(0, 0, 0, .12);
}
.btn-pink { background: #ec0e54; }
.btn-blue { background: #3e52ae; }
.drawer-buttons { display: flex; margin: 23px 40px 0; }
.drawer-buttons .btn-pink { width: 360px; }
.drawer-buttons .btn-blue { width: 358px; }

.picker {
  flex: none;
  margin: 48px 0 0 168px;
  width: 450px;
  height: 482px;
  border-radius: 4px;
  background: #fff;
  box-shadow: 0 0 4px rgba(0, 0, 0, .3), 0 8px 16px rgba(0, 0, 0, .3);
}
.saturation {
  position: relative;
  height: 246px;
  overflow: hidden;
  border-radius: 4px 4px 0 0;
  background: linear-gradient(to top, #000, transparent), linear-gradient(to right, #fff, #22fcfa);
}
.sat-knob {
  position: absolute;
  left: 438px;
  top: 110px;
  width: 24px;
  height: 24px;
  border: 2px solid #fff;
  border-radius: 50%;
}
.picker-body { padding: 32px 32px 0; }
.sliders { display: flex; align-items: center; gap: 32px; height: 56px; }
.swatch { width: 32px; height: 32px; border-radius: 50%; background: #10807c; }
.tracks { width: 322px; display: flex; flex-direction: column; gap: 16px; }
.hue, .alpha { position: relative; height: 20px; }
.hue { background: linear-gradient(to right, #f51020, #ff0 17%, #20ff20 33%, #20f5f5 50%, #1010ff 67%, #ff20ff 83%, #f51020); }
.alpha { background: linear-gradient(to right, rgba(16, 128, 124, 0), #10807c), repeating-conic-gradient(#fff 0 25%, #e2e2e2 0 50%) 0 0 / 32px 20px; }
.knob {
  position: absolute;
  top: -2px;
  width: 24px;
  height: 24px;
  border-radius: 50%;
  background: #f8f8f8;
  box-shadow: 0 2px 8px rgba(0, 0, 0, .37);
}
.knob-hue { left: 150px; }
.knob-alpha { left: 304px; }
.hex-row { display: flex; margin-top: 32px; }
.hex-field { width: 330px; margin-right: 28px; }
.hex-input {
  height: 46px;
  border: 2px solid #d9d9d9;
  border-radius: 4px;
  text-align: center;
  font: 400 21px/44px "Noto Sans", sans-serif;
  color: #333;
}
.hex-label { margin-top: 22px; padding-right: 6px; text-align: center; font: 400 22px/26px "DejaVu Sans Mono", monospace; color: #969696; }
.hex-row svg { margin-top: 34px; }

.name-field {
  flex: none;
  margin: 32px 0 0 168px;
  width: 462px;
  height: 112px;
  border-radius: 8px 8px 0 0;
  border-bottom: 2px solid #8a8a8a;
  background: #e8e8e8;
  padding: 54px 24px 0;
  font-size: 32px;
  line-height: 38px;
  letter-spacing: .3px;
  color: #959595;
}
.add-btn {
  flex: none;
  margin: 76px 0 0 168px;
  width: 462px;
  height: 176px;
  background: #10807c;
  font-size: 64px;
  letter-spacing: 1.800px;
}

.main { width: 2080px; display: flex; flex-direction: column; }
.appbar {
  position: relative;
  flex: none;
  height: 128px;
  background: #f5f5f5;
  display: flex;
  align-items: center;
  padding: 0 48px;
  box-shadow: 0 4px 8px -2px rgba(0, 0, 0, .2), 0 8px 10px rgba(0, 0, 0, .14), 0 2px 20px rgba(0, 0, 0, .12);
}
.appbar-title { margin: -2px auto 0 0; font-size: 40px; letter-spacing: .3px; }
.appbar .btn-pink { width: 198px; margin-right: 32px; }
.appbar .btn-blue { width: 140px; }
.tiles {
  flex: none;
  display: grid;
  grid-template-columns: repeat(5, 416px);
  grid-template-rows: 362px 362px 362px 362px;
  row-gap: 4px;
}
.tile {
  display: flex;
  align-items: flex-end;
  justify-content: space-between;
  padding: 0 20px 20px;
  font-size: 24px;
  letter-spacing: 2px;
  color: rgba(0, 0, 0, .6);
}
.tile span { line-height: 28px; margin-bottom: 18px; }
.trash { width: 48px; height: 48px; fill: rgba(0, 0, 0, .62); }
.red { background: #ef4438; }
.pink { background: #d8245c; }
.purple { background: #942ca8; }
.deeppurple { background: #663caf; }
.indigo { background: #3e52ae; }
.blue { background: #2e96f0; }
.lightblue { background: #24a7ee; }
.cyan { background: #1eb8d0; }
.teal { background: #149084; }
.green { background: #52ae54; }
.lightgreen { background: #8cc454; }
.lime { background: #cddb47; }
.yellow { background: #fbe950; }
.amber { background: #fbbf2c; }
.orange { background: #f8951f; }
.deeporange { background: #fb5630; }
.brown { background: #765246; }
.grey { background: #9c9c9c; }
.bluegrey { background: #5e7a88; }
.deeporange, .brown, .grey, .bluegrey { margin-top: -2px; }

/* emoji dialog */
.backdrop {
  position: absolute;
  inset: 0;
  padding-top: 2px;
  background: rgba(0, 0, 0, .5);
  display: flex;
  align-items: center;
  justify-content: center;
}
.dialog {
  width: 676px;
  height: 980px;
  border-radius: 8px;
  background: #fff;
  display: flex;
  flex-direction: column;
  box-shadow: 0 22px 30px -14px rgba(0, 0, 0, .2), 0 48px 76px 6px rgba(0, 0, 0, .14), 0 18px 92px 16px rgba(0, 0, 0, .12);
}
.dialog-title { flex: none; height: 128px; padding: 31px 48px; font-size: 40px; line-height: 60px; letter-spacing: .3px; color: #212121; }
.mart { flex: 1; min-height: 0; display: flex; flex-direction: column; border: 2px solid #d9d9d9; border-radius: 10px; }
.anchors { flex: none; height: 92px; padding: 0 12px; display: flex; border-bottom: 2px solid #d9d9d9; }
.anchor { width: 72px; padding: 24px 18px 0; fill: #858585; }
.anchor.active { fill: #ae65c5; border-bottom: 6px solid #ae65c5; }
.anchor svg { width: 36px; height: 36px; }
.search {
  flex: none;
  margin: 12px 12px 0;
  height: 62px;
  border: 2px solid #d9d9d9;
  border-radius: 10px;
  display: flex;
  align-items: center;
  justify-content: space-between;
  padding: 0 18px 0 20px;
  font-size: 32px;
  line-height: 36px;
  color: #757575;
}
.search span { margin-top: -3px; }
.scroll { flex: 1; min-height: 0; padding: 0 12px; overflow: hidden; }
.category { height: 56px; padding: 10px 12px 0; font: 500 32px/38px Inter, sans-serif; letter-spacing: -.15px; color: #222427; white-space: nowrap; }
.emojis { display: grid; grid-template-columns: repeat(9, 72px); grid-auto-rows: 72px; }
.emojis svg { width: 48px; height: 48px; margin: 12px; overflow: visible; }
.dollar { font: 700 13px "Liberation Sans", sans-serif; fill: #7b4a10; text-anchor: middle; }
.dollar-small { font-size: 11px; fill: #116b22; }
.preview { flex: none; height: 142px; border-top: 2px solid #d9d9d9; display: flex; align-items: center; padding: 0 0 0 36px; }
.preview-title { margin-left: 24px; width: 438px; font: 300 50px/60px Inter, sans-serif; letter-spacing: -1.250px; color: #999b9d; white-space: nowrap; }
.skin-tone { width: 36px; height: 36px; margin-left: 2px; border: 2px solid #d9d9d9; border-radius: 50%; background: radial-gradient(circle, #ffc648 11.5px, #fff 12.5px); }
```
